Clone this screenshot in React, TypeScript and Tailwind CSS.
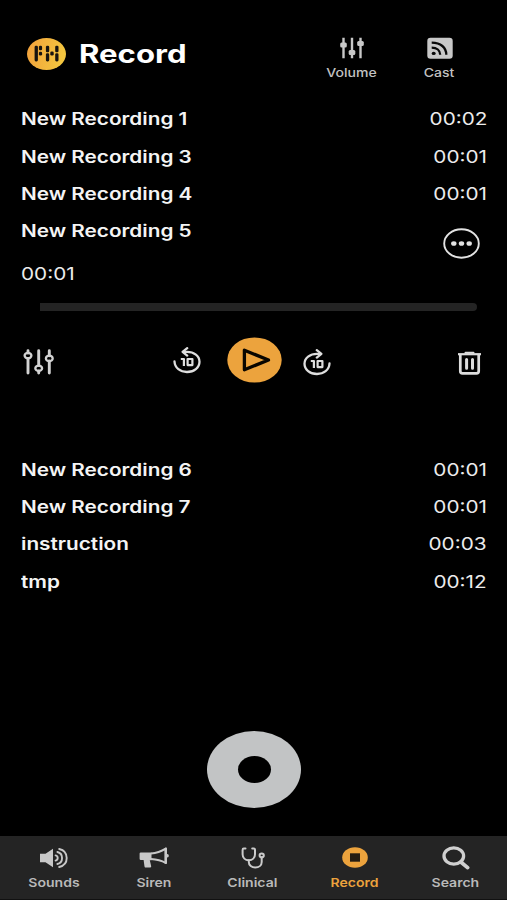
import type { ReactNode } from "react";

type IconProps = { className?: string };

function Logo() {
  return (
    <svg className="h-8 w-[39px]" viewBox="0 0 39 32">
      <defs>
        <linearGradient id="logo" x1="0" y1="0" x2="1" y2="0.2">
          <stop offset="0" stopColor="#f2a03c" />
          <stop offset="1" stopColor="#f4c63f" />
        </linearGradient>
      </defs>
      <ellipse cx="19.5" cy="16" rx="19.5" ry="16" fill="url(#logo)" />
      <g fill="#171310">
        <rect x="7.6" y="7.8" width="3.3" height="15.6" rx="1.3" />
        <rect x="11.9" y="7.8" width="3.2" height="4.4" rx="1.3" />
        <rect x="11.9" y="13.8" width="3.2" height="3.8" rx="1.3" />
        <rect x="18.9" y="7.8" width="3.3" height="6.4" rx="1.3" />
        <rect x="18.9" y="15.2" width="3.3" height="8.2" rx="1.3" />
        <rect x="23.3" y="13.4" width="3.4" height="4.2" rx="1.3" />
        <rect x="28.2" y="7.8" width="3.3" height="6.4" rx="1.3" />
        <rect x="28.2" y="15.2" width="3.3" height="8.2" rx="1.3" />
      </g>
    </svg>
  );
}

function MixerIcon({ className }: IconProps) {
  return (
    <svg className={className} viewBox="0 0 24 22" preserveAspectRatio="none" fill="#c8c8c8">
      <path d="M2.3 0.8h2.4v20.4H2.3zM10.8 0.8h2.4v20.4h-2.4zM19.3 0.8h2.4v20.4h-2.4z" />
      <rect x="0.2" y="5.4" width="6.6" height="5" rx="1.5" />
      <rect x="8.7" y="13" width="6.6" height="5" rx="1.5" />
      <rect x="17.2" y="4" width="6.6" height="5" rx="1.5" />
    </svg>
  );
}

function CastIcon() {
  return (
    <svg className="h-[22px] w-[26px]" viewBox="0 0 26 22">
      <rect x="0.3" y="0.7" width="25.4" height="21" rx="3.2" fill="#c8c8c8" />
      <ellipse cx="6.7" cy="16.4" rx="2" ry="1.7" fill="#080808" />
      <path d="M4.7 10.6C9.7 10.6 13.2 13.4 13.2 17.8M4.7 5.6C13.7 5.6 19.3 10.6 19.3 17.8" fill="none" stroke="#080808" strokeWidth="2.3" />
    </svg>
  );
}

function MoreIcon() {
  return (
    <svg className="h-[31px] w-[37px]" viewBox="0 0 37 31" fill="#e2e2e2">
      <ellipse cx="18.5" cy="15.5" rx="17.3" ry="14.2" fill="none" stroke="#e2e2e2" strokeWidth="1.9" />
      <ellipse cx="10.8" cy="15.5" rx="2.7" ry="2.3" />
      <ellipse cx="18.5" cy="15.5" rx="2.7" ry="2.3" />
      <ellipse cx="26.2" cy="15.5" rx="2.7" ry="2.3" />
    </svg>
  );
}

function SlidersIcon() {
  return (
    <svg className="h-[26px] w-8" viewBox="0 0 32 26" fill="none" stroke="#d2d2d2" strokeLinecap="round">
      <path d="M5 1.7V4M5 9.5V24M15.7 1.7V16.5M15.7 22V24M26.3 1.7V6.8M26.3 12V24" strokeWidth="2.9" />
      <ellipse cx="5" cy="6.6" rx="3.4" ry="2.7" strokeWidth="2.3" />
      <ellipse cx="15.7" cy="19.3" rx="3.4" ry="2.7" strokeWidth="2.3" />
      <ellipse cx="26.3" cy="9.4" rx="3.4" ry="2.7" strokeWidth="2.3" />
    </svg>
  );
}

function SkipIcon({ forward = false }: { forward?: boolean }) {
  return (
    <svg className="h-[27px] w-7" viewBox="0 0 28 27" fill="none" stroke="#dedede" strokeWidth="2.3">
      <g transform={forward ? "translate(28 0) scale(-1 1)" : undefined}>
        <path d="M1.5 14.5C1.8 21 7.3 25 14 25C21 25 26.5 20.6 26.5 14.7C26.5 8.8 21 4.8 14 4.8H10.5" strokeLinecap="round" />
        <path d="M14.2 1.2L9.6 4.8L14.2 8.6" strokeLinejoin="round" strokeLinecap="round" />
      </g>
      <path d="M7.8 12H10.9V19.1M14.6 12H19.4V18.1H14.6Z" strokeWidth="2.2" strokeLinejoin="round" />
    </svg>
  );
}

function PlayIcon() {
  return (
    <svg className="h-[46px] w-[55px]" viewBox="0 0 55 46">
      <ellipse cx="27.5" cy="23" rx="27.2" ry="22.6" fill="#eca33d" />
      <path d="M17.4 13.2V32.8L41.5 23Z" fill="none" stroke="#090600" strokeWidth="3.3" strokeLinejoin="round" />
    </svg>
  );
}

function TrashIcon() {
  return (
    <svg className="h-6 w-[25px]" viewBox="0 0 25 24" fill="none" stroke="#dddddd">
      <path d="M1 3.2H24" strokeWidth="2.2" />
      <path d="M8.5 1.8H16.5" strokeWidth="2" strokeLinecap="round" />
      <path d="M3.3 4V20.2Q3.3 22.3 5.5 22.3H19.5Q21.7 22.3 21.7 20.2V4" strokeWidth="2.7" />
      <path d="M9.6 8.5V17.3M15.5 8.5V17.3" strokeWidth="3" strokeLinecap="round" />
    </svg>
  );
}

function SoundsIcon() {
  return (
    <svg className="h-5 w-7" viewBox="0 0 28 20" fill="none" stroke="#c8c8c8" strokeWidth="1.9" strokeLinecap="round">
      <path d="M0 5.8H5.5L13 0.8V19.2L5.5 14.2H0Z" fill="#c8c8c8" stroke="none" />
      <path d="M15.6 7.4C18.4 8 18.4 12 15.6 12.6M17.4 4C23.6 5.4 23.6 14.6 17.4 16M19.2 1C29.2 3.4 29.2 16.6 19.2 19" />
    </svg>
  );
}

function SirenIcon() {
  return (
    <svg className="h-[21px] w-[30px]" viewBox="0 0 30 21" fill="#c8c8c8">
      <path d="M0.6 6.5Q0.6 5.4 1.8 5.4H12.5V13.2H10.8L12.2 19.2Q12.4 20.6 11 20.6H6.8Q5.8 20.6 5.5 19.4L4.6 13H1.8Q0.6 13 0.6 11.8Z" />
      <path d="M12 6.5C18 6 22.5 4.2 26.8 1.6V16C22.5 13.6 18 12.4 12 12.1" fill="none" stroke="#c8c8c8" strokeWidth="2" strokeLinejoin="round" />
      <path d="M25.5 1.2Q27.8 -0.4 28 2V15.7Q27.8 18 25.5 16.4Z" />
      <ellipse cx="28.3" cy="8.8" rx="1.5" ry="1.8" />
    </svg>
  );
}

function ClinicalIcon() {
  return (
    <svg className="h-[22px] w-6" viewBox="0 0 24 22" fill="none" stroke="#cbcbcb" strokeWidth="2" strokeLinecap="round">
      <path d="M4.5 1.6H2.8Q1.6 1.6 1.6 3V7.2C1.6 11 4.2 13.2 7.8 13.2C11.4 13.2 14 11 14 7.2V3Q14 1.6 12.8 1.6H11.2" />
      <path d="M7.8 13.2V15C7.8 18.4 10.8 20.6 14.2 20.6C17.8 20.6 20.7 18.4 20.7 15V10.6" />
      <ellipse cx="20.7" cy="8.4" rx="2.1" ry="1.8" />
    </svg>
  );
}

function RecordTabIcon() {
  return (
    <svg className="h-[21px] w-[26px]" viewBox="0 0 26 21">
      <ellipse cx="13" cy="10.5" rx="12.8" ry="10.3" fill="#eca33d" />
      <rect x="8" y="6.3" width="10" height="8.4" fill="#241c12" />
    </svg>
  );
}

function SearchIcon() {
  return (
    <svg className="h-6 w-7" viewBox="0 0 28 24" fill="none" stroke="#d0d0d0">
      <ellipse cx="11.8" cy="10" rx="9.8" ry="8.1" strokeWidth="3.3" />
      <path d="M18.8 16L25.6 21.6" strokeWidth="3.8" strokeLinecap="round" />
    </svg>
  );
}

function Row({ name, time }: { name: string; time: string }) {
  return (
    <li className="flex h-[37.33px] items-center justify-between pr-5 pl-[20.5px] text-[17px] text-[#f4f4f4]">
      <span className="origin-left scale-x-[1.22] font-semibold whitespace-nowrap">{name}</span>
      <span className="origin-right scale-x-[1.22] text-[#ececec]">{time}</span>
    </li>
  );
}

function Tab({ className, label, active, children }: { className: string; label: string; active?: boolean; children: ReactNode }) {
  return (
    <button className={`flex flex-col items-center ${className} ${active ? "text-[#eca33d]" : "text-[#b9b9b9]"}`}>
      <span className="flex h-[43px] items-center justify-center">{children}</span>
      <span className="scale-x-[1.17] text-[12px] leading-[8px] font-semibold">{label}</span>
    </button>
  );
}

export default function App() {
  return (
    <div className="flex h-[900px] w-[507px] flex-col overflow-hidden bg-black font-['Inter',sans-serif] text-white">
      <header className="flex h-[101.33px] shrink-0 items-start pl-[26.5px]">
        <div className="mt-[37.5px] flex h-8 items-center gap-[13px]">
          <Logo />
          <h1 className="w-[107px] origin-left scale-x-[1.245] text-[25px] leading-8 font-bold">Record</h1>
        </div>
        <button className="mt-[37px] ml-[116px] flex w-[100px] flex-col items-center gap-[7px] text-[#c2c2c2]">
          <MixerIcon className="h-[22px] w-6" />
          <span className="scale-x-[1.17] text-[12px] leading-[14px] font-medium">Volume</span>
        </button>
        <button className="mt-[37px] flex w-[76px] flex-col items-center gap-[7px] text-[#c2c2c2]">
          <CastIcon />
          <span className="scale-x-[1.17] text-[12px] leading-[14px] font-medium">Cast</span>
        </button>
      </header>

      <main className="flex-1">
        <ul>
          <Row name="New Recording 1" time="00:02" />
          <Row name="New Recording 3" time="00:01" />
          <Row name="New Recording 4" time="00:01" />
          <li className="h-[238.33px] text-[17px]">
            <div className="flex justify-between pr-[27px] pl-[20.5px]">
              <div>
                <p className="h-[37.33px] origin-left scale-x-[1.22] leading-[37.33px] font-semibold whitespace-nowrap text-[#f4f4f4]">New Recording 5</p>
                <p className="mt-[13px] h-5 origin-left scale-x-[1.22] leading-5 text-[#ececec]">00:01</p>
              </div>
              <button className="mt-[14.5px] h-[31px]">
                <MoreIcon />
              </button>
            </div>
            <div className="mt-[19px] mr-[30px] ml-10 h-2 rounded-r-full rounded-l-xs bg-[#242424]" />
            <div className="mt-[26px] flex h-[46px] items-center pl-[23px]">
              <div className="mt-1">
                <SlidersIcon />
              </div>
              <div className="mt-0.5 ml-[118px]">
                <SkipIcon />
              </div>
              <div className="ml-[25.5px]">
                <PlayIcon />
              </div>
              <div className="mt-1.5 ml-[21px]">
                <SkipIcon forward />
              </div>
              <div className="mt-1.5 ml-[126.5px]">
                <TrashIcon />
              </div>
            </div>
          </li>
          <Row name="New Recording 6" time="00:01" />
          <Row name="New Recording 7" time="00:01" />
          <Row name="instruction" time="00:03" />
          <Row name="tmp" time="00:12" />
        </ul>
        <button className="mt-[130px] ml-[207px] flex h-[77px] w-[94px] items-center justify-center rounded-[50%] bg-[#c2c4c5]">
          <span className="h-[27px] w-[33px] rounded-[50%] bg-black" />
        </button>
      </main>

      <nav className="flex h-[64px] shrink-0 border-b border-[#111111] bg-[#242424] pl-1">
        <Tab className="w-[100px]" label="Sounds">
          <SoundsIcon />
        </Tab>
        <Tab className="w-[99px]" label="Siren">
          <SirenIcon />
        </Tab>
        <Tab className="w-[99px]" label="Clinical">
          <ClinicalIcon />
        </Tab>
        <Tab className="w-[106px]" label="Record" active>
          <RecordTabIcon />
        </Tab>
        <Tab className="w-[95px]" label="Search">
          <SearchIcon />
        </Tab>
      </nav>
    </div>
  );
}
